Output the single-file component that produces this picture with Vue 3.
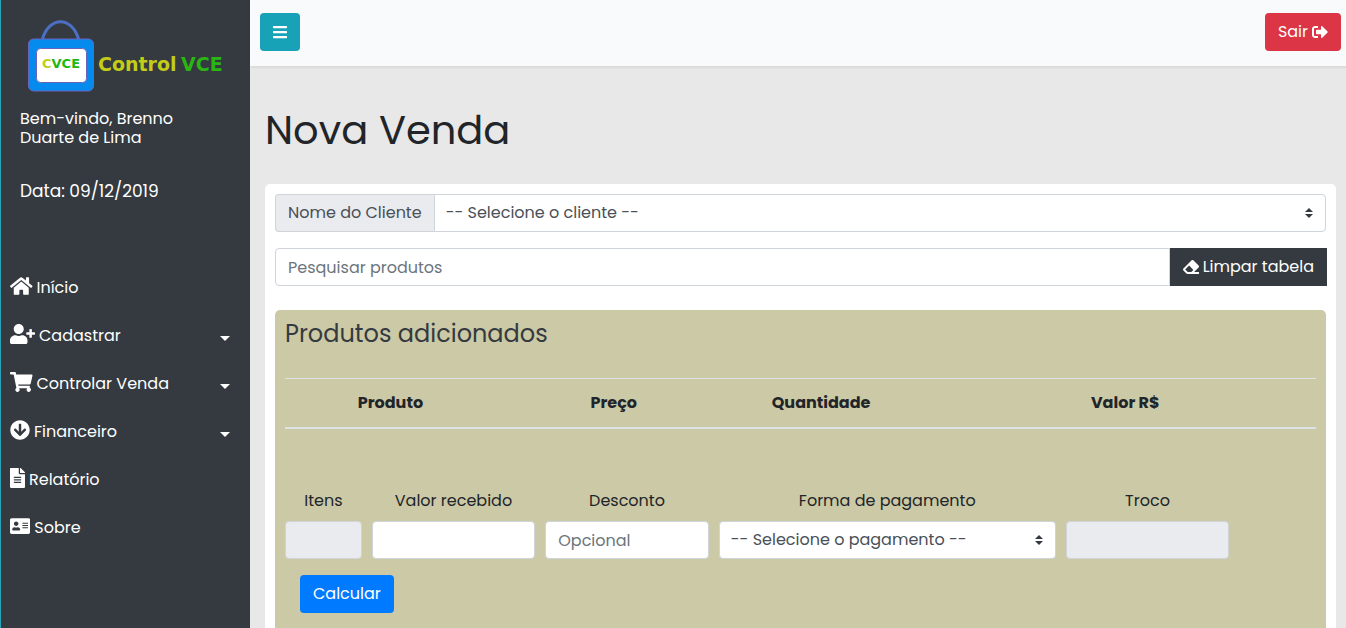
<script setup>
import { ref } from 'vue'

const icons = {
  home: { w: 576, d: 'M280.37 148.26L96 300.11V464a16 16 0 0 0 16 16l112.06-.29a16 16 0 0 0 15.92-16V368a16 16 0 0 1 16-16h64a16 16 0 0 1 16 16v95.64a16 16 0 0 0 16 16.05L464 480a16 16 0 0 0 16-16V300L295.67 148.26a12.19 12.19 0 0 0-15.3 0zM571.6 251.47L488 182.56V44.05a12 12 0 0 0-12-12h-56a12 12 0 0 0-12 12v72.61L318.47 43a48 48 0 0 0-61 0L4.34 251.47a12 12 0 0 0-1.6 16.9l25.5 31A12 12 0 0 0 45.15 301l235.22-193.74a12.19 12.19 0 0 1 15.3 0L530.9 301a12 12 0 0 0 16.9-1.6l25.5-31a12 12 0 0 0-1.7-16.93z' },
  userPlus: { w: 640, d: 'M624 208h-64v-64c0-8.8-7.2-16-16-16h-32c-8.8 0-16 7.2-16 16v64h-64c-8.8 0-16 7.2-16 16v32c0 8.8 7.2 16 16 16h64v64c0 8.8 7.2 16 16 16h32c8.8 0 16-7.2 16-16v-64h64c8.8 0 16-7.2 16-16v-32c0-8.8-7.2-16-16-16zm-400 48c70.7 0 128-57.3 128-128S294.7 0 224 0 96 57.3 96 128s57.3 128 128 128zm89.6 32h-16.7c-22.2 10.2-46.9 16-72.9 16s-50.6-5.8-72.9-16h-16.7C60.2 288 0 348.2 0 422.4V464c0 26.5 21.5 48 48 48h352c26.5 0 48-21.5 48-48v-41.6c0-74.2-60.2-134.4-134.4-134.4z' },
  cart: { w: 576, d: 'M528.12 301.319l47.273-208C578.806 78.301 567.391 64 551.99 64H159.208l-9.166-44.81C147.758 8.021 137.93 0 126.529 0H24C10.745 0 0 10.745 0 24v16c0 13.255 10.745 24 24 24h69.883l70.248 343.435C147.325 417.1 136 435.222 136 456c0 30.928 25.072 56 56 56s56-25.072 56-56c0-15.674-6.447-29.835-16.824-40h209.647C430.447 426.165 424 440.326 424 456c0 30.928 25.072 56 56 56s56-25.072 56-56c0-22.172-12.888-41.332-31.579-50.405l5.517-24.276c3.413-15.018-8.002-29.319-23.403-29.319H218.117l-6.545-32h293.145c11.206 0 20.92-7.754 23.403-18.681z' },
  arrowDown: { w: 512, d: 'M504 256c0 137-111 248-248 248S8 393 8 256 119 8 256 8s248 111 248 248zm-143.6-28.9L288 302.6V120c0-13.3-10.7-24-24-24h-16c-13.3 0-24 10.7-24 24v182.6l-72.4-75.5c-9.3-9.7-24.8-9.9-34.3-.4l-10.9 11c-9.4 9.4-9.4 24.6 0 33.9L239 404.3c9.4 9.4 24.6 9.4 33.9 0l132.7-132.7c9.4-9.4 9.4-24.6 0-33.9l-10.9-11c-9.5-9.5-25-9.3-34.3.4z' },
  file: { w: 384, d: 'M224 136V0H24C10.7 0 0 10.7 0 24v464c0 13.3 10.7 24 24 24h336c13.3 0 24-10.7 24-24V160H248c-13.2 0-24-10.8-24-24zm64 236c0 6.6-5.4 12-12 12H108c-6.6 0-12-5.4-12-12v-8c0-6.6 5.4-12 12-12h168c6.6 0 12 5.4 12 12v8zm0-64c0 6.6-5.4 12-12 12H108c-6.6 0-12-5.4-12-12v-8c0-6.6 5.4-12 12-12h168c6.6 0 12 5.4 12 12v8zm0-72v8c0 6.6-5.4 12-12 12H108c-6.6 0-12-5.4-12-12v-8c0-6.6 5.4-12 12-12h168c6.6 0 12 5.4 12 12zm96-114.1v6.1H256V0h6.1c6.4 0 12.5 2.5 17 7l97.9 98c4.5 4.5 7 10.6 7 16.9z' },
  card: { w: 576, d: 'M528 32H48C21.5 32 0 53.5 0 80v352c0 26.5 21.5 48 48 48h480c26.5 0 48-21.5 48-48V80c0-26.5-21.5-48-48-48zm-352 96c35.3 0 64 28.7 64 64s-28.7 64-64 64-64-28.7-64-64 28.7-64 64-64zm112 236.8c0 10.6-10 19.2-22.4 19.2H86.4C74 384 64 375.4 64 364.8v-19.2c0-31.8 30.1-57.6 67.2-57.6h5c12.3 5.1 25.7 8 39.8 8s27.6-2.9 39.8-8h5c37.1 0 67.2 25.8 67.2 57.6v19.2zM512 312c0 4.4-3.6 8-8 8H360c-4.4 0-8-3.6-8-8v-16c0-4.4 3.6-8 8-8h144c4.4 0 8 3.6 8 8v16zm0-64c0 4.4-3.6 8-8 8H360c-4.4 0-8-3.6-8-8v-16c0-4.4 3.6-8 8-8h144c4.4 0 8 3.6 8 8v16zm0-64c0 4.4-3.6 8-8 8H360c-4.4 0-8-3.6-8-8v-16c0-4.4 3.6-8 8-8h144c4.4 0 8 3.6 8 8v16z' }
}

const menu = [
  { label: 'Início', icon: icons.home },
  { label: 'Cadastrar', icon: icons.userPlus, sub: true },
  { label: 'Controlar Venda', icon: icons.cart, sub: true },
  { label: 'Financeiro', icon: icons.arrowDown, sub: true },
  { label: 'Relatório', icon: icons.file },
  { label: 'Sobre', icon: icons.card, small: true }
]

const client = ref('')
const search = ref('')
const received = ref('')
const discount = ref('')
const payment = ref('')
</script>

<template>
  <div class="shell">
    <aside class="sidebar">
      <svg class="logo" viewBox="0 0 204 76" role="img" aria-label="Control VCE">
        <path d="M15.500 19C22 -4 45 -4 51.500 19" fill="none" stroke="#4c6fc4" stroke-width="3" />
        <rect x="1.500" y="19" width="65" height="52" rx="5" fill="#058bee" stroke="#6a63bd" />
        <rect x="9.500" y="28.500" width="50" height="34" rx="4" fill="#fff" stroke="#6a63bd" />
        <text x="15" y="48" class="mark"><tspan fill="#c3cc17">C</tspan><tspan fill="#20b80c">VCE</tspan></text>
        <text x="71" y="51" class="brand" fill="#c3cc17">Control</text>
        <text x="154" y="51" class="brand" fill="#2bb512">VCE</text>
      </svg>
      <p class="welcome">Bem-vindo, Brenno Duarte de Lima</p>
      <p class="date">Data: 09/12/2019</p>
      <nav class="menu">
        <a v-for="item in menu" :key="item.label" href="#" class="item">
          <svg class="icon" :class="{ small: item.small }" :viewBox="`0 0 ${item.icon.w} 512`" aria-hidden="true"><path :d="item.icon.d" /></svg>
          <span>{{ item.label }}</span>
          <i v-if="item.sub" class="caret"></i>
        </a>
      </nav>
    </aside>

    <div class="page">
      <header class="topbar">
        <button type="button" class="btn toggle" aria-label="Menu">
          <svg class="glyph" viewBox="0 0 448 512" aria-hidden="true"><path d="M16 132h416c9 0 16-7 16-16V76c0-9-7-16-16-16H16C7 60 0 67 0 76v40c0 9 7 16 16 16zm0 160h416c9 0 16-7 16-16v-40c0-9-7-16-16-16H16c-9 0-16 7-16 16v40c0 9 7 16 16 16zm0 160h416c9 0 16-7 16-16v-40c0-9-7-16-16-16H16c-9 0-16 7-16 16v40c0 9 7 16 16 16z" /></svg>
        </button>
        <button type="button" class="btn exit">
          <span>Sair</span>
          <svg class="glyph" viewBox="0 0 512 512" aria-hidden="true"><path d="M497 273L329 441c-15 15-41 4.500-41-17v-96H152c-13.300 0-24-10.700-24-24v-96c0-13.300 10.700-24 24-24h136V88c0-21.400 25.900-32 41-17l168 168c9.300 9.400 9.300 24.600 0 34zM192 436v-40c0-6.600-5.400-12-12-12H96c-17.700 0-32-14.300-32-32V160c0-17.700 14.300-32 32-32h84c6.600 0 12-5.400 12-12V76c0-6.600-5.400-12-12-12H96c-53 0-96 43-96 96v192c0 53 43 96 96 96h84c6.600 0 12-5.400 12-12z" /></svg>
        </button>
      </header>

      <main class="content">
        <h1>Nova Venda</h1>
        <section class="card">
          <div class="group">
            <label for="client" class="addon">Nome do Cliente</label>
            <select id="client" v-model="client" class="field select joined">
              <option value="">-- Selecione o cliente --</option>
            </select>
          </div>
          <div class="group search">
            <input v-model="search" class="field" type="text" placeholder="Pesquisar produtos" aria-label="Pesquisar produtos" />
            <button type="button" class="btn clear">
              <svg class="glyph" viewBox="0 0 512 512" aria-hidden="true"><path d="M497.941 273.941c18.745-18.745 18.745-49.137 0-67.882l-160-160c-18.745-18.745-49.136-18.746-67.883 0l-256 256c-18.745 18.745-18.745 49.137 0 67.882l96 96A48.004 48.004 0 0 0 144 480h356c6.627 0 12-5.373 12-12v-40c0-6.627-5.373-12-12-12H355.883l142.058-142.059zm-302.627-62.627l137.373 137.373L265.373 416H150.628l-80-80 124.686-124.686z" /></svg>
              <span>Limpar tabela</span>
            </button>
          </div>

          <div class="panel">
            <h2>Produtos adicionados</h2>
            <table>
              <thead>
                <tr>
                  <th scope="col" class="c-product">Produto</th>
                  <th scope="col" class="c-price">Preço</th>
                  <th scope="col" class="c-amount">Quantidade</th>
                  <th scope="col" class="c-value">Valor R$</th>
                </tr>
              </thead>
            </table>
            <form class="totals" @submit.prevent>
              <div class="cell one">
                <label for="items">Itens</label>
                <input id="items" class="field" type="text" readonly />
              </div>
              <div class="cell two">
                <label for="received">Valor recebido</label>
                <input id="received" v-model="received" class="field" type="text" />
              </div>
              <div class="cell two">
                <label for="discount">Desconto</label>
                <input id="discount" v-model="discount" class="field" type="text" placeholder="Opcional" />
              </div>
              <div class="cell four">
                <label for="payment">Forma de pagamento</label>
                <select id="payment" v-model="payment" class="field select">
                  <option value="">-- Selecione o pagamento --</option>
                </select>
              </div>
              <div class="cell two">
                <label for="change">Troco</label>
                <input id="change" class="field" type="text" readonly />
              </div>
              <button type="submit" class="btn calc">Calcular</button>
            </form>
          </div>
        </section>
      </main>
    </div>
  </div>
</template>

<style>
body {
  margin: 0;
  background: #e8e8e8;
}
</style>

<style scoped>
.shell,
.shell * {
  box-sizing: border-box;
}
.shell {
  display: flex;
  height: 100vh;
  overflow: hidden;
  font-family: Poppins, Inter, "Open Sans", sans-serif;
  font-size: 16px;
  line-height: 24px;
  color: #212529;
}
.sidebar {
  flex: 0 0 250px;
  padding: 20px 0;
  border-left: 1px solid #2ba3b8;
  background: #343a40;
  color: #fff;
}
.logo {
  display: block;
  width: 204px;
  height: 76px;
  margin-left: 26px;
}
.mark {
  font: bold 13px "DejaVu Sans", sans-serif;
}
.brand {
  font: bold 19px "DejaVu Sans", sans-serif;
}
.welcome {
  margin: 13px 60px 0 19px;
  line-height: 19px;
}
.date {
  margin: 32px 0 0 19px;
  font-size: 17px;
}
.menu {
  display: flex;
  flex-direction: column;
  margin-top: 61px;
}
.item {
  display: flex;
  align-items: center;
  gap: 4px;
  height: 48px;
  padding: 0 20px 0 9px;
  color: #fff;
  text-decoration: none;
}
.icon {
  height: 20px;
  margin-bottom: 4px;
  fill: currentColor;
}
.icon.small {
  height: 18px;
}
.caret {
  margin: 4px 0 0 auto;
  border: 5px solid transparent;
  border-top-color: #fff;
  border-bottom: 0;
}
.page {
  flex: 1;
  min-width: 0;
}
.topbar {
  display: flex;
  justify-content: space-between;
  align-items: center;
  height: 66px;
  padding: 0 5px 2px 10px;
  background: #f9fafc;
  box-shadow: 1px 1px 3px rgba(0, 0, 0, 0.1);
}
.btn {
  display: flex;
  align-items: center;
  justify-content: center;
  gap: 4px;
  height: 38px;
  padding: 0 13px;
  border: 0;
  border-radius: 4px;
  color: #fff;
  font: inherit;
  white-space: nowrap;
  cursor: pointer;
}
.glyph {
  height: 16px;
  margin-bottom: 1px;
  fill: currentColor;
}
.toggle {
  background: #17a2b8;
}
.exit {
  background: #dc3545;
}
.content {
  padding: 40px 10px 0 15px;
}
h1 {
  margin: 0 0 30px;
  font-size: 40px;
  font-weight: 400;
  line-height: 48px;
}
.card {
  padding: 10px;
  border-radius: 5px;
  background: #fff;
}
.group {
  display: flex;
}
.search {
  margin: 16px -1px 24px 0;
}
.addon {
  display: flex;
  align-items: center;
  padding: 0 12px;
  border: 1px solid #ced4da;
  border-right: 0;
  border-radius: 4px 0 0 4px;
  background: #e9ebef;
  color: #495057;
  white-space: nowrap;
}
.field {
  display: block;
  width: 100%;
  height: 38px;
  padding: 0 12px;
  border: 1px solid #ced4da;
  border-radius: 4px;
  background: #fff;
  color: #495057;
  font: inherit;
}
.field::placeholder {
  color: #6c757d;
  opacity: 1;
}
.field[readonly] {
  background: #e9ebef;
}
.select {
  appearance: none;
  padding: 0 28px 0 11px;
  background: #fff url("data:image/svg+xml,%3Csvg xmlns='http://www.w3.org/2000/svg' viewBox='0 0 4 5'%3E%3Cpath fill='%23343a40' d='M2 0L0 2h4zm0 5L0 3h4z'/%3E%3C/svg%3E") no-repeat right 12px center / 8px 10px;
}
.joined {
  flex: 1;
  border-radius: 0 4px 4px 0;
}
.search .field {
  flex: 1;
  min-width: 0;
  border-radius: 4px 0 0 4px;
}
.clear {
  border-radius: 0;
  background: #343a40;
}
.panel {
  min-height: 360px;
  padding: 10px;
  border-radius: 5px 5px 0 0;
  background: #ccc9a6;
}
h2 {
  margin: 0 0 30px;
  color: #343a40;
  font-size: 24px;
  font-weight: 400;
  line-height: 28px;
}
table {
  width: 100%;
  border-collapse: collapse;
  table-layout: fixed;
}
th {
  padding: 12px;
  border-top: 1px solid #dee2e6;
  border-bottom: 2px solid #dee2e6;
  font-weight: 700;
  text-align: center;
}
.c-product {
  width: 22%;
  padding-right: 28px;
}
.c-price {
  width: 19%;
  padding-left: 20px;
}
.c-amount {
  width: 22%;
}
.c-value {
  width: 37%;
}
.totals {
  display: grid;
  grid-template-columns: repeat(12, 1fr);
  gap: 16px 10px;
  margin-top: 60px;
}
.cell label {
  display: block;
  margin-bottom: 8px;
  text-align: center;
  white-space: nowrap;
}
.one {
  grid-column: span 1;
}
.two {
  grid-column: span 2;
}
.four {
  grid-column: span 4;
}
.calc {
  grid-column: 1 / -1;
  justify-self: start;
  margin-left: 15px;
  background: #007bff;
}
</style>
